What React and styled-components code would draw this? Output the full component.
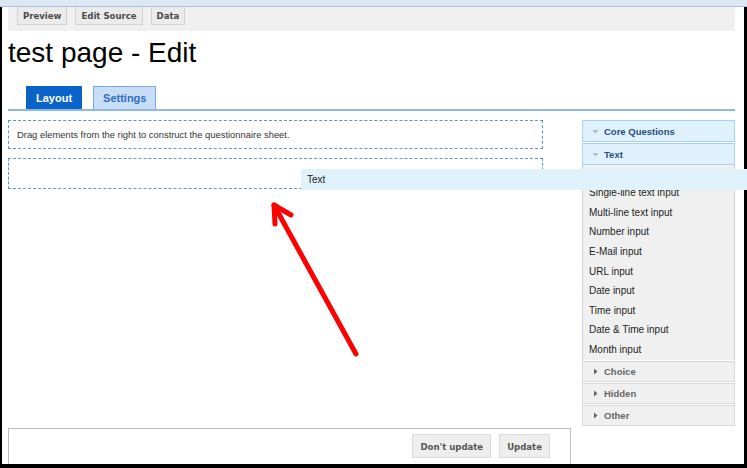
import React from "react";
import styled, { createGlobalStyle } from "styled-components";

const GlobalStyle = createGlobalStyle`
  html, body { margin: 0; padding: 0; background: #fff; }
  body { font-family: "Liberation Sans", Arial, sans-serif; }
  * { box-sizing: border-box; }
`;

const Screen = styled.div`
  position: relative;
  width: 747px;
  height: 468px;
  display: flex;
  flex-direction: column;
  overflow: hidden;
  background: #fff;
`;

const TopStrip = styled.div`
  height: 7px;
  flex: none;
  background: #dbe7f4;
  border-bottom: 1px solid #a9c2de;
`;

const Frame = styled.div`
  flex: 1;
  min-height: 0;
  display: flex;
  flex-direction: column;
  border-left: 2px solid #000;
  border-right: 3px solid #000;
  border-bottom: 4px solid #000;
  padding: 0 9px 0 6px;
  overflow: hidden;
`;

const Toolbar = styled.div`
  height: 24px;
  flex: none;
  background: #f0f0f0;
  display: flex;
  align-items: flex-start;
  gap: 8px;
  padding-left: 9px;
`;

const ToolButton = styled.div`
  height: 18px;
  padding: 0 5px;
  display: flex;
  align-items: center;
  background: #ebebeb;
  border: 1px solid #d2d2d2;
  border-top: none;
  font-family: "DejaVu Sans Condensed", "DejaVu Sans", sans-serif;
  font-weight: bold;
  font-size: 9.5px;
  color: #4a4a4a;
`;

const Title = styled.h1`
  margin: 6px 0 0;
  font-family: "Liberation Sans", Arial, sans-serif;
  font-weight: normal;
  font-size: 28px;
  line-height: 32px;
  color: #000;
`;

const TabRow = styled.div`
  margin-top: 17px;
  display: flex;
  gap: 11px;
  padding-left: 18px;
  border-bottom: 2px solid #8cb9e6;
`;

const Tab = styled.div`
  height: 23px;
  padding: 0 9px;
  display: flex;
  align-items: center;
  font-weight: bold;
  font-size: 11px;
  background: ${(p) => (p.$active ? "#0a63c8" : "#c7ddf8")};
  color: ${(p) => (p.$active ? "#fff" : "#2f6cc4")};
  border: 1px solid ${(p) => (p.$active ? "#0a63c8" : "#78a9e4")};
  border-bottom: none;
`;

const Main = styled.div`
  margin-top: 9px;
  height: 306px;
  flex: none;
  display: flex;
  gap: 39px;
`;

const Canvas = styled.div`
  width: 535px;
  display: flex;
  flex-direction: column;
  gap: 9px;
`;

const DropZone = styled.div`
  height: ${(p) => p.$h}px;
  border: 1px dashed #5f93d4;
  display: flex;
  align-items: center;
  padding-left: 8px;
  font-size: 9.4px;
  color: #333;
`;

const Palette = styled.div`
  width: 153px;
  display: flex;
  flex-direction: column;
  gap: 1px;
`;

const GroupHeader = styled.div`
  height: ${(p) => p.$h}px;
  flex: none;
  display: flex;
  align-items: center;
  gap: 5px;
  padding-left: 9px;
  font-weight: bold;
  font-size: 9.5px;
  background: ${(p) => (p.$open ? "#def1fd" : "#f0f0f0")};
  border: 1px solid ${(p) => (p.$open ? "#a8d1ef" : "#d9d9d9")};
  color: ${(p) => (p.$open ? "#1f4f80" : "#666")};
`;

const Caret = styled.svg`
  width: 7px;
  height: 7px;
  flex: none;
`;

const ItemList = styled.div`
  height: 195px;
  flex: none;
  display: flex;
  flex-direction: column;
  padding-top: 18px;
  background: #f0f0f0;
  border-left: 1px solid #cfcfcf;
  border-right: 1px solid #cfcfcf;
  margin-top: -1px;
`;

const Item = styled.div`
  height: 19.6px;
  flex: none;
  display: flex;
  align-items: center;
  padding-left: 6px;
  font-size: 10px;
  color: #1e1e1e;
`;

const BottomBar = styled.div`
  margin-top: 2px;
  width: 563px;
  height: 44px;
  flex: none;
  border: 1px solid #bdbdbd;
  display: flex;
  justify-content: flex-end;
  align-items: flex-start;
  gap: 8px;
  padding: 5px 20px 0 0;
`;

const ActionButton = styled.div`
  height: 24px;
  padding: 0 7px;
  display: flex;
  align-items: center;
  background: #eeeeee;
  border: 1px solid #dadada;
  font-family: "DejaVu Sans Condensed", "DejaVu Sans", sans-serif;
  font-weight: bold;
  font-size: 9.5px;
  color: #555;
`;

const DragHelper = styled.div`
  position: absolute;
  left: 301px;
  top: 169px;
  width: 446px;
  height: 21px;
  background: #e0f3fd;
  display: flex;
  align-items: center;
  padding-left: 6px;
  font-size: 10px;
  color: #222;
`;

const ArrowLayer = styled.svg`
  position: absolute;
  left: 0;
  top: 0;
  width: 747px;
  height: 468px;
  pointer-events: none;
`;

const Down = ({ color }) => (
  <Caret viewBox="0 0 7 7">
    <path d="M0.5 2 L6.5 2 L3.5 5.5 Z" fill={color} />
  </Caret>
);

const Right = ({ color }) => (
  <Caret viewBox="0 0 7 7">
    <path d="M2 0.5 L5.5 3.5 L2 6.5 Z" fill={color} />
  </Caret>
);

const items = [
  "Single-line text input",
  "Multi-line text input",
  "Number input",
  "E-Mail input",
  "URL input",
  "Date input",
  "Time input",
  "Date & Time input",
  "Month input",
];

export default function App() {
  return (
    <>
      <GlobalStyle />
      <Screen>
        <TopStrip />
        <Frame>
          <Toolbar>
            <ToolButton>Preview</ToolButton>
            <ToolButton>Edit Source</ToolButton>
            <ToolButton>Data</ToolButton>
          </Toolbar>
          <Title>test page - Edit</Title>
          <TabRow>
            <Tab $active>Layout</Tab>
            <Tab>Settings</Tab>
          </TabRow>
          <Main>
            <Canvas>
              <DropZone $h={29}>
                Drag elements from the right to construct the questionnaire sheet.
              </DropZone>
              <DropZone $h={31} />
            </Canvas>
            <Palette>
              <GroupHeader $open $h={22}>
                <Down color="#a9bccd" />
                Core Questions
              </GroupHeader>
              <GroupHeader $open $h={22}>
                <Down color="#a9bccd" />
                Text
              </GroupHeader>
              <ItemList>
                {items.map((t) => (
                  <Item key={t}>{t}</Item>
                ))}
              </ItemList>
              <GroupHeader $h={21}>
                <Right color="#666" />
                Choice
              </GroupHeader>
              <GroupHeader $h={21}>
                <Right color="#666" />
                Hidden
              </GroupHeader>
              <GroupHeader $h={21}>
                <Right color="#666" />
                Other
              </GroupHeader>
            </Palette>
          </Main>
          <BottomBar>
            <ActionButton>Don't update</ActionButton>
            <ActionButton>Update</ActionButton>
          </BottomBar>
        </Frame>
        <DragHelper>Text</DragHelper>
        <ArrowLayer viewBox="0 0 747 468">
          <g stroke="#ff0000" strokeWidth="5" strokeLinecap="round" fill="none">
            <line x1="356" y1="354" x2="275" y2="207" />
            <line x1="274" y1="205" x2="275" y2="224" />
            <line x1="274" y1="205" x2="291" y2="215" />
          </g>
        </ArrowLayer>
      </Screen>
    </>
  );
}
